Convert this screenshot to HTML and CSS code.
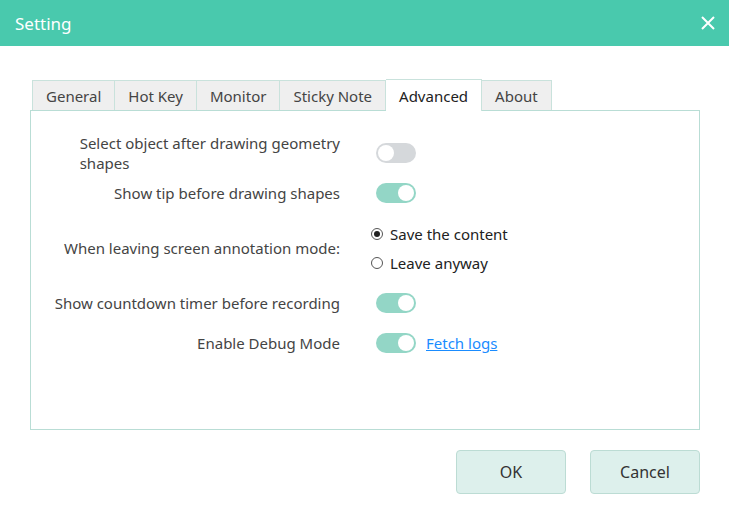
FILE: index.html
```html
<!DOCTYPE html>
<html>
<head>
  <title>Setting</title>
  <link rel="stylesheet" href="styles.css">
</head>
<body>
  <div class="dialog">
    <div class="header">
      <span class="title">Setting</span>
      <svg class="close" width="16" height="16" viewBox="0 0 16 16">
        <path d="M2 2 L14 14 M14 2 L2 14" stroke="#fff" stroke-width="2" fill="none"/>
      </svg>
    </div>

    <div class="body">
      <div class="tabs">
        <div class="tab">General</div>
        <div class="tab">Hot Key</div>
        <div class="tab">Monitor</div>
        <div class="tab">Sticky Note</div>
        <div class="tab active">Advanced</div>
        <div class="tab">About</div>
      </div>

      <div class="panel">
        <div class="row">
          <div class="label"><span class="wrap">Select object after drawing geometry<br>shapes</span></div>
          <div class="value"><span class="toggle"></span></div>
        </div>
        <div class="row">
          <div class="label">Show tip before drawing shapes</div>
          <div class="value"><span class="toggle on"></span></div>
        </div>
        <div class="row tall">
          <div class="label">When leaving screen annotation mode:</div>
          <div class="value radios">
            <div class="radio checked"><span class="dot"></span>Save the content</div>
            <div class="radio"><span class="dot"></span>Leave anyway</div>
          </div>
        </div>
        <div class="row">
          <div class="label">Show countdown timer before recording</div>
          <div class="value"><span class="toggle on"></span></div>
        </div>
        <div class="row">
          <div class="label">Enable Debug Mode</div>
          <div class="value"><span class="toggle on"></span><a class="link" href="#">Fetch logs</a></div>
        </div>
      </div>

      <div class="buttons">
        <button class="btn">OK</button>
        <button class="btn">Cancel</button>
      </div>
    </div>
  </div>
</body>
</html>
```

FILE: styles.css
```css
body {
  margin: 0;
  font-family: "Noto Sans", "Open Sans", sans-serif;
  background-color: #fff;
}

.dialog {
  width: 729px;
  height: 528px;
  background-color: #fff;
}

.header {
  height: 46px;
  background-color: #49c9ad;
  display: flex;
  align-items: center;
  justify-content: space-between;
  padding: 0 13px 0 15px;
}

.title {
  color: #fff;
  font-size: 17px;
}

.body {
  padding: 33px 29px 0 30px;
}

.tabs {
  display: flex;
  padding-left: 2px;
  height: 31px;
  align-items: flex-end;
}

.tab {
  height: 29px;
  padding: 0 13px;
  background-color: #efefef;
  border: 1px solid #c9e2dc;
  border-bottom: none;
  border-left: none;
  font-size: 15px;
  color: #444;
  display: flex;
  align-items: center;
}

.tab:first-child {
  border-left: 1px solid #c9e2dc;
}

.tab.active {
  height: 31px;
  background-color: #fff;
  color: #222;
  margin-bottom: -1px;
  position: relative;
  z-index: 1;
}

.panel {
  height: 296px;
  border: 1px solid #b9ddd5;
  padding-top: 22px;
}

.row {
  height: 40px;
  display: flex;
  align-items: center;
}

.row.tall {
  height: 70px;
}

.label {
  width: 309px;
  text-align: right;
  font-size: 15px;
  line-height: 20px;
  color: #444;
}

.wrap {
  display: inline-block;
  text-align: left;
  white-space: nowrap;
}

.value {
  margin-left: 36px;
  display: flex;
  align-items: center;
}

.toggle {
  display: inline-block;
  width: 40px;
  height: 20px;
  border-radius: 10px;
  background-color: #d5d8db;
  position: relative;
}

.toggle::after {
  content: "";
  position: absolute;
  top: 2px;
  left: 2px;
  width: 16px;
  height: 16px;
  border-radius: 50%;
  background-color: #fff;
}

.toggle.on {
  background-color: #93d6c6;
}

.toggle.on::after {
  left: 22px;
}

.link {
  margin-left: 10px;
  font-size: 15px;
  color: #1a8cff;
}

.radios {
  flex-direction: column;
  align-items: flex-start;
  margin-left: 31px;
  gap: 7px;
}

.radio {
  display: flex;
  align-items: center;
  height: 22px;
  font-size: 15px;
  color: #222;
}

.dot {
  width: 10px;
  height: 10px;
  border: 1px solid #555;
  border-radius: 50%;
  margin-right: 7px;
  position: relative;
}

.radio.checked .dot::after {
  content: "";
  position: absolute;
  top: 2px;
  left: 2px;
  width: 6px;
  height: 6px;
  border-radius: 50%;
  background-color: #222;
}

.buttons {
  display: flex;
  justify-content: flex-end;
  gap: 24px;
  margin-top: 20px;
}

.btn {
  width: 110px;
  height: 44px;
  background-color: #ddf0ec;
  border: 1px solid #bcdcd4;
  border-radius: 4px;
  font-family: inherit;
  font-size: 16px;
  color: #333;
}
```
